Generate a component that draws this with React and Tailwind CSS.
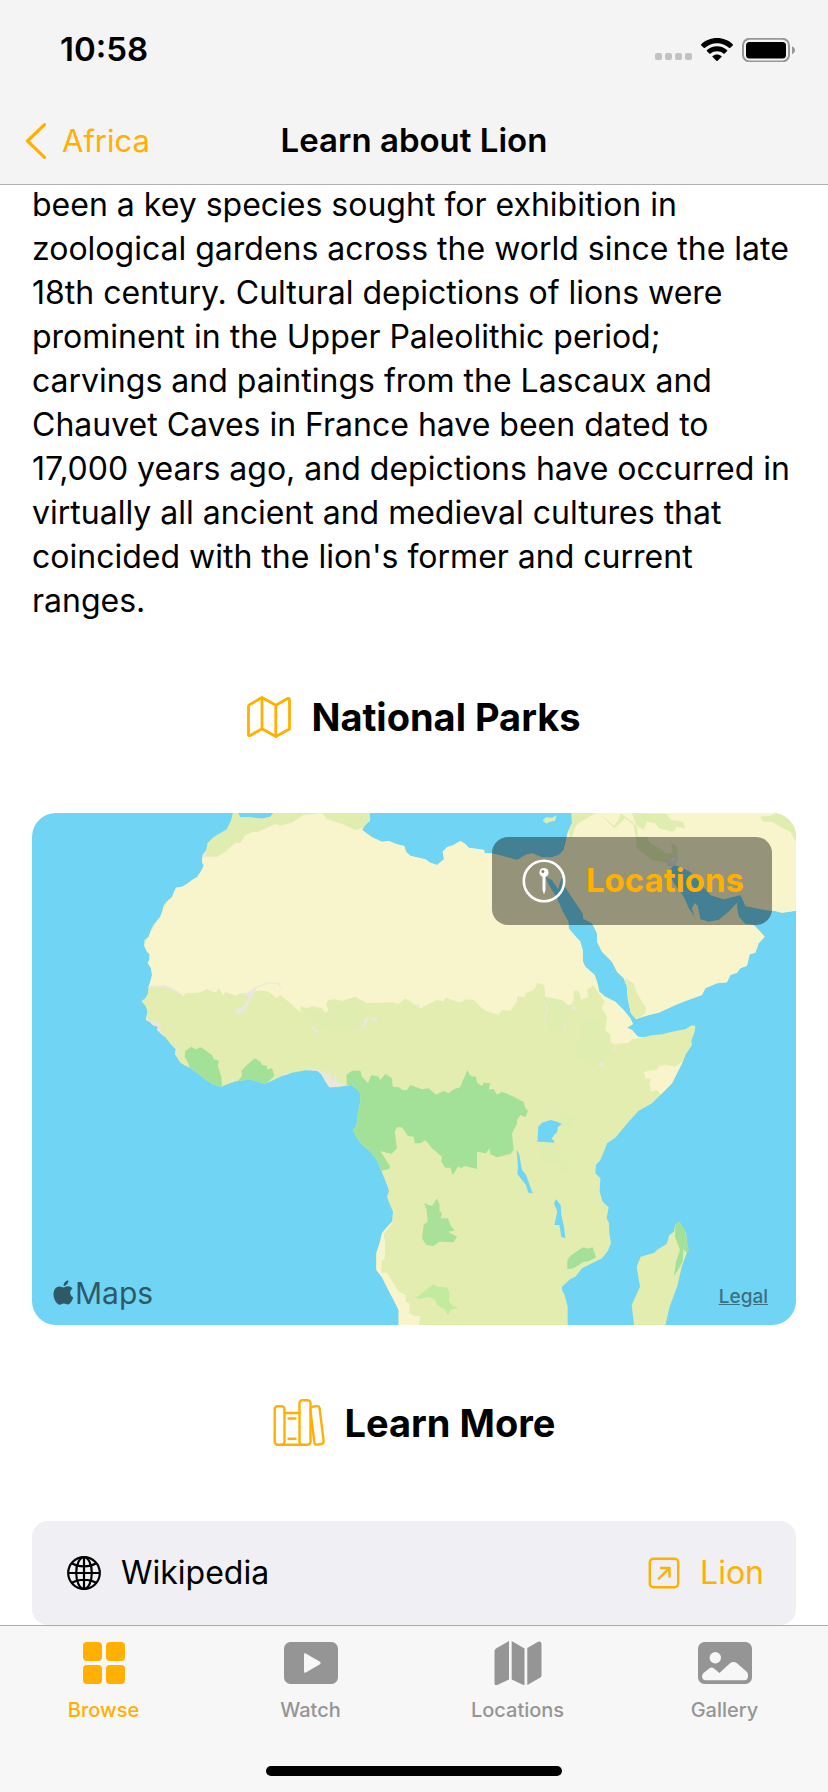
import React from "react";

const TABS = [
  { label: "Browse", icon: BrowseIcon, active: true },
  { label: "Watch", icon: WatchIcon },
  { label: "Locations", icon: MapFillIcon },
  { label: "Gallery", icon: GalleryIcon },
];

function StatusIcons() {
  return (
    <div className="flex items-center gap-2">
      <svg className="mt-3 h-2 w-[38px]" viewBox="0 0 38 8" fill="#c2c2c3" aria-hidden="true">
        <rect x="0" width="7" height="7" y="1" rx="2" />
        <rect x="10" width="7" height="7" y="1" rx="2" />
        <rect x="20" width="7" height="7" y="1" rx="2" />
        <rect x="30" width="7" height="7" y="1" rx="2" />
      </svg>
      <svg className="h-6 w-8" viewBox="0 0 32 24" fill="#000" aria-hidden="true">
        <path d="M16 0C22.200 0 27.700 2.300 31.700 6.200C32.100 6.600 32.100 7.100 31.700 7.500L29.300 9.800C28.900 10.200 28.400 10.200 28 9.800C24.800 6.900 20.600 5.200 16 5.200S7.200 6.900 4 9.800C3.600 10.200 3.100 10.200 2.700 9.800L.3 7.500C-.1 7.100-.1 6.600.3 6.200C4.300 2.300 9.800 0 16 0Z" />
        <path d="M16 8.200C19.900 8.200 23.400 9.700 26 12C26.400 12.400 26.400 12.900 26 13.300L23.600 15.600C23.200 16 22.800 16 22.400 15.600C20.700 14.100 18.400 13.300 16 13.300S11.300 14.100 9.600 15.600C9.200 16 8.800 16 8.400 15.600L6 13.300C5.600 12.900 5.600 12.400 6 12C8.600 9.700 12.100 8.200 16 8.200Z" />
        <path d="M16 16.400C17.700 16.400 19.200 17 20.400 17.900C20.800 18.300 20.800 18.700 20.400 19.100L16.600 22.800C16.200 23.200 15.800 23.200 15.400 22.800L11.600 19.100C11.200 18.700 11.200 18.300 11.600 17.900C12.800 17 14.300 16.400 16 16.400Z" />
      </svg>
      <svg className="ml-px h-6 w-[54px]" viewBox="0 0 54 24" aria-hidden="true">
        <rect x="1" y="0.800" width="46" height="22.600" rx="6.500" fill="none" stroke="#979797" strokeWidth="2" />
        <rect x="4" y="4" width="40" height="16.500" rx="3.500" fill="#000" />
        <path d="M50 8.200C51.800 9 53 10.500 53 12.200S51.800 15.400 50 16.200Z" fill="#979797" />
      </svg>
    </div>
  );
}

function MapOutlineIcon() {
  return (
    <svg className="h-[42px] w-[44px]" viewBox="0 0 44 42" fill="none" stroke="#ffb000" strokeWidth="2.800" strokeLinejoin="round" aria-hidden="true">
      <path d="M2.500 8.800L15 1.500L28.800 9.200L40.500 2.500Q42.500 1.800 42.500 4V33L28.800 40.500L15 32.800L3.200 39.500Q1.500 40.200 1.500 38.500V10.500Q1.500 9.300 2.500 8.800ZM15 1.500V32.800M28.800 9.200V40.500" />
    </svg>
  );
}

function BooksIcon() {
  return (
    <svg className="h-12 w-[52px]" viewBox="0 0 52 48" fill="none" stroke="#ffb000" strokeWidth="2.400" strokeLinejoin="round" strokeLinecap="round" aria-hidden="true">
      <rect x="1.700" y="7.200" width="9.800" height="38.600" rx="3" />
      <path d="M8 45.800H29M11.500 14H26.500" />
      <path d="M15.500 19.500H22.500M15.500 39.800H22.500" />
      <rect x="26.500" y="1.200" width="11" height="44.600" rx="3" />
      <path d="M37.500 9.500Q37.700 8 39.300 7.700L43.800 7.100Q46.200 6.900 46.600 9.300L50.600 41.900Q50.800 44.600 48.300 45L44.200 45.600Q41.800 45.900 41.400 43.500L37.500 12" />
    </svg>
  );
}

function PinIcon() {
  return (
    <svg className="size-[44px]" viewBox="0 0 44 44" fill="none" aria-hidden="true">
      <circle cx="22" cy="22" r="20.200" stroke="#fff" strokeWidth="2.600" />
      <path d="M20.500 16H23.500V31L22 35.500L20.500 31Z" fill="#fff" />
      <circle cx="22" cy="13.600" r="4.600" fill="#fff" />
      <circle cx="20.900" cy="12.600" r="1.500" fill="#817e6e" />
    </svg>
  );
}

function GlobeIcon() {
  return (
    <svg className="size-[34px]" viewBox="0 0 34 34" fill="none" stroke="#000" strokeWidth="2.200" aria-hidden="true">
      <circle cx="17" cy="17" r="15.800" />
      <ellipse cx="17" cy="17" rx="7.800" ry="15.800" />
      <path d="M17 1V33M1 17H33M5 7.200C11.500 11.300 22.500 11.300 29 7.200M5 26.800C11.500 22.700 22.500 22.700 29 26.800" />
    </svg>
  );
}

function ArrowSquareIcon() {
  return (
    <svg className="size-8" viewBox="0 0 32 32" fill="none" stroke="#ffb000" strokeWidth="2.400" strokeLinecap="round" strokeLinejoin="round" aria-hidden="true">
      <rect x="1.800" y="1.800" width="28.400" height="28.400" rx="3.500" />
      <path d="M10.800 21.700L21.500 11M13 11H21.500V19.500" />
    </svg>
  );
}

function BrowseIcon() {
  return (
    <svg className="h-[44px] w-[42px]" viewBox="0 0 42 44" fill="currentColor" aria-hidden="true">
      <rect x="0" y="1" width="19" height="19" rx="4" />
      <rect x="23" y="1" width="19" height="19" rx="4" />
      <rect x="0" y="24" width="19" height="19" rx="4" />
      <rect x="23" y="24" width="19" height="19" rx="4" />
    </svg>
  );
}

function WatchIcon() {
  return (
    <svg className="h-[44px] w-[54px]" viewBox="0 0 54 44" aria-hidden="true">
      <rect y="1" width="54" height="42" rx="6.500" fill="currentColor" />
      <path d="M20 13.500Q20 11.500 21.800 12.500L36 20.800Q37.500 22 36 23.200L21.800 31.500Q20 32.500 20 30.500Z" fill="#f7f7f7" />
    </svg>
  );
}

function MapFillIcon() {
  return (
    <svg className="h-[44px] w-[48px]" viewBox="0 0 48 44" fill="currentColor" aria-hidden="true">
      <path d="M15 0V38.500L3.300 44Q.5 45 .5 42V10Q.5 8.500 2 7.500ZM17.700 0L30.500 7.500V44.500L17.700 38.500ZM33.300 7L44 .8Q47.500-.3 47.500 3V34.500Q47.500 36 46 36.800L33.300 44Z" />
    </svg>
  );
}

function GalleryIcon() {
  return (
    <svg className="h-[44px] w-[54px]" viewBox="0 0 54 44" aria-hidden="true">
      <rect y="1" width="54" height="42" rx="6.500" fill="currentColor" />
      <circle cx="17.300" cy="16.700" r="5.700" fill="#f7f7f7" />
      <path d="M4 35.500Q4 33.500 5.500 32L11.500 27.200Q13.700 25.600 16 27.400L21.500 32L32 22.300Q35.500 19.500 39 22.300L48.700 30.700Q50 32 50 34V35.500Q50 39.200 46 39.200H8Q4 39.200 4 35.500Z" fill="#f7f7f7" />
    </svg>
  );
}

const LAND =
  "M603 39L598 60L585 88L560 103L545 112L527 130L523 150L512 165L510 185L515 198L508 212L495 232L480 240L465 252L450 260L432 263L425 278L420 292L402 306L394 318L390 335L385 350L366 372L355 392L350 410L337 420L337 438L345 455L353 463L352 480L347 488L357 505L360 525L355 545L349 562L348 580L340 595L328 604L340 617L346 632L342 660L355 667L362 675L378 680L375 690L388 702L400 712L418 735L432 748L428 762L440 780L445 788L460 797L475 804L500 822L520 838L540 852L567 860L590 851L612 844L640 840L660 840L697 851L725 840L750 828L780 818L820 811L855 812L868 822L880 845L892 862L920 861L958 855L970 865L983 875L986 900L978 935L975 965L972 980L963 990L970 1005L985 1028L1015 1055L1035 1080L1047 1110L1057 1135L1065 1155L1071 1172L1065 1190L1073 1212L1083 1235L1080 1265L1062 1285L1050 1300L1043 1330L1033 1360L1033 1410L1050 1432L1068 1468L1085 1500L1100 1530L1100 1580H1607L1607 1520L1598 1485L1590 1470L1590 1460L1615 1437L1630 1430L1650 1405L1680 1390L1710 1375L1728 1352L1737 1328L1732 1300L1731 1270L1724 1255L1730 1222L1712 1205L1703 1175L1705 1135L1690 1120L1692 1095L1705 1080L1720 1045L1725 1030L1750 1013L1790 965L1820 932L1860 910L1885 885L1920 850L1940 810L1955 780L1960 765L1980 735L1978 722L1988 695L1990 678L1980 676L1960 688L1920 695L1890 703L1860 706L1835 712L1818 710L1800 690L1785 683L1803 672L1795 655L1775 630L1750 605L1720 590L1702 575L1695 545L1688 525L1660 500L1653 485L1652 450L1645 425L1622 400L1610 385L1609 365L1590 330L1575 295L1550 255L1540 230L1560 240L1578 266L1588 235L1592 233L1600 262L1625 300L1652 340L1654 356L1680 370L1695 400L1695 425L1710 455L1740 485L1755 515L1775 535L1785 560L1788 600L1797 640L1812 657L1850 645L1880 638L1930 615L1960 603L2010 585L2020 565L2055 550L2085 547L2095 525L2115 518L2125 505L2145 497L2153 463L2170 458L2180 430L2198 410L2185 395L2165 375L2140 372L2120 350L2115 320L2116 308L2090 335L2060 360L2030 365L2005 358L1997 318L1988 310L1980 325L1988 350L1970 325L1955 290L1945 275L1925 250L1910 215L1925 195L1945 200L1975 215L2005 250L2035 285L2075 298L2125 285L2133 300L2140 318L2200 330L2230 333L2250 338L2292 332V39H1619L1620 70L1608 95L1600 130L1595 150L1580 165L1560 172L1530 172L1500 160L1480 165L1455 180L1430 173L1400 165L1378 160L1357 160L1357 150L1310 143L1300 132L1285 123L1265 135L1245 142L1232 155L1236 178L1215 195L1195 188L1180 178L1160 173L1135 167L1122 155L1117 138L1095 133L1070 123L1050 125L1020 112L990 90L1000 75L1013 62V39H724L715 50L690 56L650 52L625 52L618 39Z";

function AfricaMap() {
  return (
    <svg className="block h-[512px] w-full" viewBox="0 39 2292 1536" preserveAspectRatio="xMidYMid slice" role="img" aria-label="Map of Africa">
      <defs>
        <clipPath id="land">
          <path d={LAND} />
        </clipPath>
      </defs>
      <rect y="39" width="2292" height="1536" fill="#70d5f5" />
      <path d={LAND} fill="#e2edaf" />
      <g clipPath="url(#land)">
        <path fill="#dfedb1" d="M500 30H1030V110H950L815 45L730 90L620 140L560 172H500ZM805 620L885 640L890 600L970 590L1005 640L990 685L930 700L860 680ZM1530 590L1590 600L1620 615L1625 640L1600 655L1600 690L1550 695ZM1640 655L1700 655L1725 690L1740 720L1740 770L1690 795L1640 780L1630 740L1650 710Z" />
        <path fill="#f8f5cc" d="M480 170H555L580 155L610 128L625 128L640 105L665 95L675 97L730 72L745 77L780 68L815 45L870 39L885 58L930 72L970 90L1005 80L1030 0H2400V665H2000L1860 690L1835 712L1800 718L1790 728L1745 733L1735 725L1735 705L1720 690L1725 650L1710 625L1718 605L1700 580L1685 555L1665 570L1670 590L1648 600L1640 572L1625 572L1625 600L1620 612L1608 615L1590 600L1540 590L1537 555L1515 548L1508 568L1480 580L1480 590L1455 590L1455 605L1435 632L1410 630L1400 645L1360 632L1345 620L1325 600L1300 598L1285 608L1260 600L1240 593L1235 605L1215 600L1185 615L1165 625L1120 595L1100 612L1080 607L1005 610L970 590L930 603L910 598L890 600L882 612L890 632L880 638L870 625L840 618L825 625L805 618L805 637L770 605L760 598L745 585L735 595L705 573H660L650 585L625 580L610 587L580 575L575 587L560 565L552 578L525 568L500 578L460 580L455 588L400 560H340L300 500Z" />
        <path fill="#e2edaf" d="M1780 535L1805 550L1815 580L1842 625L1840 640L1820 655L1797 650L1770 590Z" />
        <path fill="#ebe7dc" d="M350 558L400 555L440 575L455 588L400 562L350 564ZM605 632L632 622L650 597L648 588L620 580L645 578L673 560L710 546L742 549L750 574L738 552L710 550L675 563L665 580L650 615L637 634L615 643ZM835 676L850 683L862 703L845 693ZM1000 655L1035 652L1033 665L1010 656L995 685L950 690L990 683ZM1152 612L1163 615L1158 625ZM1530 590L1548 625L1540 655L1542 700L1537 655L1544 628ZM1620 615L1637 625L1622 632ZM1595 655L1604 695L1598 690ZM1744 742L1752 742L1745 765ZM820 800L870 812L890 825L880 800L905 845L910 810L915 845L940 855L892 865L870 825ZM510 150L520 150L525 170L505 175ZM1715 783L1696 795L1712 800ZM342 640L350 660L375 665L390 672L380 682L400 715L370 690L335 665ZM427 742L440 750L430 762ZM746 825L780 815L760 828Z" />
        <path fill="#f8f5cc" d="M1836 817L1850 812L1874 810L1878 800L1900 794L1930 800L1950 785H1970L1895 890L1888 885L1874 870L1856 875L1853 852L1858 835L1840 837ZM1083 1268L1055 1302L1060 1330L1058 1375L1048 1385V1418L1065 1418L1085 1450L1100 1475L1122 1485L1120 1505L1132 1510L1132 1540L1145 1548L1165 1548L1160 1580H1020V1270Z" />
        <path fill="#a2e197" d="M460 752L478 740L490 748L507 742L528 757L540 765L545 778L560 782L558 800L568 830L570 865L480 835L470 792L458 770ZM612 850L630 828L628 812L645 795L668 775L685 785L690 795L705 798L705 808L720 805L727 828L697 856ZM945 860L943 825L960 812L985 812L990 830L1008 850L1018 825L1040 830L1044 841L1060 822L1080 835L1082 860L1100 862L1112 870L1125 870L1135 855L1170 868L1190 865L1212 884L1235 873L1250 880L1265 868L1285 862L1293 840L1298 830L1306 810L1315 828L1332 830L1335 848L1350 858L1355 848L1375 850L1370 868L1385 868L1395 884L1410 875L1445 890L1475 905L1480 925L1488 933L1480 952L1465 945L1455 960L1455 972L1440 1000L1445 1050L1435 1062L1395 1072L1375 1062L1373 1045L1362 1060L1335 1055V1107L1300 1098L1285 1105L1280 1098L1262 1125L1255 1103L1240 1103L1228 1085L1230 1070L1200 1045L1180 1020L1165 1030L1148 1030L1145 1010L1128 1008L1110 982L1095 982L1088 995L1095 1045L1078 1062L1045 1053L1075 1100L1070 1108L1045 1112L950 1000Z" />
        <path fill="#aae19a" d="M1176 1210L1200 1218L1215 1195L1223 1215L1222 1232L1230 1240L1226 1255L1248 1255L1255 1275L1268 1292L1248 1295L1275 1310L1265 1327L1222 1325L1205 1338L1183 1335L1170 1315L1175 1275L1187 1265L1184 1230Z" />
        <path fill="#a2e197" d="M1606 1380L1615 1368L1640 1350L1654 1342L1668 1346L1682 1342L1692 1372L1670 1384L1655 1385L1625 1405L1606 1408Z" />
        <path fill="#c3eb9f" d="M1152 1493L1175 1475L1204 1452L1215 1460L1244 1462L1252 1475L1252 1505L1262 1518L1280 1522L1255 1530L1248 1547L1240 1530L1215 1515L1210 1500L1190 1490L1165 1498Z" />
        <path fill="#e0edb0" d="M1520 1030L1575 1025L1585 1070L1620 1110L1600 1125L1570 1085L1525 1085ZM1590 940L1630 945L1620 990L1590 985Z" />
        <path fill="#dfedb1" d="M1619 39H1690L1665 55L1640 70L1630 80L1619 115L1608 95ZM1700 39L1747 78L1764 50V39L1794 60L1815 80L1818 110L1845 110L1855 130L1880 145L1905 162L1922 158L1918 130L1934 138L1937 165L1915 180L1915 190L1860 180L1815 145L1812 115L1805 75L1780 55L1747 85ZM1800 39L1904 42L1918 60L1954 66L1959 85L1935 80L1925 95L1880 85L1870 70L1845 65L1835 90L1812 75ZM2184 50L2215 47L2234 39H2292V125L2275 95L2245 80L2220 65H2195Z" />
        <path fill="#e8e1dd" d="M1900 180L1925 182L1930 160L1938 170L1930 200L1908 198Z" />
      </g>
      <path fill="#dfedb1" d="M1532 62L1542 52L1560 53L1574 46L1569 62L1552 66L1544 71Z" />
      <path fill="#70d5f5" d="M1516 1025L1519 980L1530 968L1556 960L1575 965L1590 972L1577 982L1576 995L1566 1006L1558 1018L1568 1022L1564 1028L1539 1026ZM1454 1048L1462 1065L1470 1110L1482 1125L1502 1180L1489 1178L1482 1155L1456 1122L1458 1100ZM1572 1198L1586 1215L1588 1245L1596 1280L1600 1315L1588 1310L1582 1275L1567 1275L1576 1235L1566 1210Z" />
      <path fill="#e2edaf" d="M1942 1265L1929 1275L1926 1295L1912 1305L1904 1332L1874 1350L1868 1358L1826 1370L1814 1400L1824 1460L1799 1515L1807 1580H1899L1913 1520L1937 1455L1949 1400L1968 1350L1962 1300Z" />
      <path fill="#a2e197" d="M1942 1265L1959 1290L1965 1325L1971 1350L1964 1358L1954 1348L1952 1385L1939 1408L1926 1428L1932 1385L1944 1350L1929 1310L1930 1272Z" />
    </svg>
  );
}

function AppleMark() {
  return (
    <svg className="h-[26px] w-[21px]" viewBox="0 0 21 26" fill="#2e5967" aria-hidden="true">
      <path d="M10.600 6C10.400 3.200 12.700.6 15.300.2C15.600 3.200 13.100 5.900 10.600 6ZM10.700 7.400C11.600 7.400 13 6.200 15 6.200C17.400 6.300 18.800 7.400 19.600 8.600C16.100 10.700 16.500 15.800 20.300 17.300C19.500 19.800 17.500 24.500 14.800 24.600C13.300 24.600 12.800 23.600 10.900 23.600S8.300 24.600 6.900 24.700C4 24.700.5 19.600.5 14.300C.5 9.300 3.300 6.500 6.400 6.400C8.200 6.400 9.600 7.400 10.700 7.400Z" />
    </svg>
  );
}

function SectionHeading({ icon, children }) {
  return (
    <h2 className="flex items-center justify-center gap-5 text-[38px] leading-12 font-bold">
      {icon}
      {children}
    </h2>
  );
}

export default function App() {
  return (
    <div className="flex min-h-screen flex-col bg-white font-['Inter','Liberation_Sans',sans-serif] text-black">
      <header className="sticky top-0 z-10 border-b border-[#b2b2b2] bg-[#f4f4f4]">
        <div className="flex h-24 items-center justify-between pt-1 pr-8 pl-15">
          <time className="text-[33px] font-semibold">10:58</time>
          <StatusIcons />
        </div>
        <div className="grid h-22 grid-cols-[1fr_auto_1fr] items-center px-6 pt-0.5">
          <a href="#africa" className="flex items-center gap-4 text-[31px] text-[#ffb000]">
            <svg className="h-9 w-[22px]" viewBox="0 0 22 36" fill="none" stroke="currentColor" strokeWidth="3.200" strokeLinecap="round" strokeLinejoin="round" aria-hidden="true">
              <path d="M20.500 1.700L3.500 18L20.500 34.300" />
            </svg>
            Africa
          </a>
          <h1 className="text-[33px] font-semibold">Learn about Lion</h1>
        </div>
      </header>

      <main className="-mt-0.5 flex-1 px-8">
        <p className="text-[32px] leading-11">
          been a key species sought for exhibition in zoological gardens across the world since the late 18th century. Cultural depictions of lions were prominent in the Upper Paleolithic period; carvings and paintings from the Lascaux and Chauvet Caves in France have been dated to 17,000 years ago, and depictions have occurred in virtually all ancient and medieval cultures that coincided with the lion's former and current ranges.
        </p>

        <section className="pt-[70px]">
          <SectionHeading icon={<MapOutlineIcon />}>National Parks</SectionHeading>
          <div className="relative mt-18 overflow-hidden rounded-3xl">
            <AfricaMap />
            <a href="#locations" className="absolute top-6 right-6 flex h-22 items-center gap-5 rounded-2xl bg-black/40 pr-7 pl-[30px] text-[33px] font-bold text-[#ffb000]">
              <PinIcon />
              Locations
            </a>
            <div className="absolute bottom-3 left-[21px] flex items-center gap-px text-[30px] leading-10 text-[#2e5967]">
              <AppleMark />
              Maps
            </div>
            <a href="#legal" className="absolute right-7 bottom-[14px] text-[19px] leading-7 font-medium text-[#3b7082] underline">
              Legal
            </a>
          </div>
        </section>

        <section className="pt-[74px]">
          <SectionHeading icon={<BooksIcon />}>Learn More</SectionHeading>
          <div className="mt-[74px] flex h-[104px] items-center justify-between rounded-2xl bg-[#efeff4] pr-8 pl-[35px] text-[32px]">
            <span className="flex items-center gap-5">
              <GlobeIcon />
              Wikipedia
            </span>
            <a href="#lion" className="flex items-center gap-5 text-[#ffb000]">
              <ArrowSquareIcon />
              Lion
            </a>
          </div>
        </section>
      </main>

      <footer className="sticky bottom-0 z-10 border-t border-[#acacac] bg-[#f7f7f7]">
        <nav className="grid grid-cols-4 pt-[15px]">
          {TABS.map(({ label, icon: Icon, active }) => (
            <button
              key={label}
              type="button"
              className={
                active
                  ? "flex flex-col items-center gap-[9px] text-[20px] leading-8 font-medium text-[#ffb000]"
                  : "flex flex-col items-center gap-[9px] text-[20px] leading-8 font-medium text-[#959595]"
              }
            >
              <Icon />
              {label}
            </button>
          ))}
        </nav>
        <div className="mx-auto mt-10 mb-4 h-[10px] w-[296px] rounded-full bg-black" />
      </footer>
    </div>
  );
}
